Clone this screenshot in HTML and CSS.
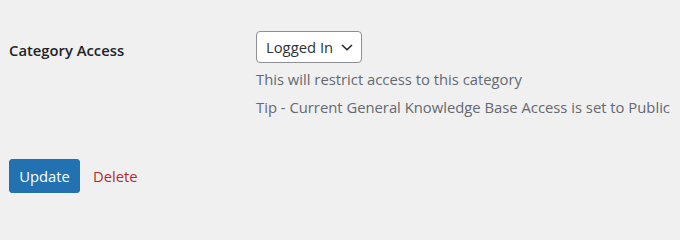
FILE: index.html
```html
<!DOCTYPE html>
<html>
<head>
<meta charset="utf-8">
<link rel="stylesheet" href="styles.css">
</head>
<body>
<form class="term-form">
  <div class="field-row">
    <label class="field-label" for="access">Category Access</label>
    <div class="field-control">
      <div class="select-box" id="access">
        <span class="select-value">Logged In</span>
        <svg class="chevron" width="12" height="7" viewBox="0 0 12 7"><path d="M1 1 L6 5.8 L11 1" fill="none" stroke="#1d2327" stroke-width="1.5"/></svg>
      </div>
      <p class="description first">This will restrict access to this category</p>
      <p class="description">Tip - Current General Knowledge Base Access is set to Public</p>
    </div>
  </div>
  <div class="actions">
    <button type="button" class="button-primary">Update</button>
    <a class="delete-link" href="#">Delete</a>
  </div>
</form>
</body>
</html>
```
FILE: styles.css
```css
html, body {
  margin: 0;
  padding: 0;
  background: #f0f0f1;
}
body {
  font-family: "Open Sans", "Noto Sans", sans-serif;
  font-size: 14.8px;
  color: #3c434a;
}
.term-form {
  padding: 31px 0 0 9px;
}
.field-row {
  display: grid;
  grid-template-columns: 247px auto;
}
.field-label {
  font-weight: 600;
  color: #1d2327;
  line-height: 21px;
  padding-top: 9px;
}
.select-box {
  box-sizing: border-box;
  width: 106px;
  height: 32px;
  border: 1px solid #8c8f94;
  border-radius: 4px;
  background: #fff;
  display: flex;
  align-items: center;
  justify-content: space-between;
  padding: 0 8px 0 9px;
  color: #2c3338;
}
.select-value {
  line-height: 21px;
}
.chevron {
  display: block;
}
.description {
  margin: 7px 0 0;
  color: #646970;
  line-height: 21px;
}
.description.first {
  margin-top: 6px;
}
.actions {
  display: flex;
  align-items: center;
  margin-top: 41px;
  gap: 13px;
}
.button-primary {
  box-sizing: border-box;
  height: 34px;
  width: 71px;
  background: #2271b1;
  border: 1px solid #2271b1;
  border-radius: 3px;
  color: #fff;
  font-family: inherit;
  font-size: 14.8px;
  line-height: 21px;
  padding: 0;
}
.delete-link {
  color: #b32d2e;
  text-decoration: none;
  line-height: 21px;
}
```
